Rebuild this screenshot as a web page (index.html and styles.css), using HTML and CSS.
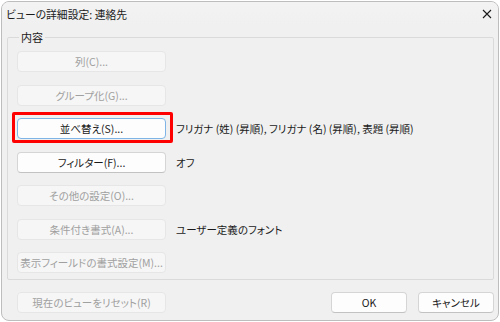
FILE: index.html
```html
<!DOCTYPE html>
<html lang="ja">
<head>
    <meta charset="UTF-8">
    <title>ビューの詳細設定: 連絡先</title>
    <link rel="stylesheet" href="styles.css">
</head>
<body>
    <div class="window">
        <div class="titlebar">
            <span class="title">ビューの詳細設定: 連絡先</span>
            <svg class="close" width="10" height="10" viewBox="0 0 10 10">
                <path d="M1 1 L9 9 M9 1 L1 9" stroke="#1a1a1a" stroke-width="1.1" fill="none"/>
            </svg>
        </div>

        <fieldset class="group">
            <legend>内容</legend>
            <div class="row">
                <button class="btn" disabled>列(C)...</button>
            </div>
            <div class="row">
                <button class="btn" disabled>グループ化(G)...</button>
            </div>
            <div class="row">
                <button class="btn focus">並べ替え(S)...<span class="mark"></span></button>
                <span class="info">フリガナ (姓) (昇順), フリガナ (名) (昇順), 表題 (昇順)</span>
            </div>
            <div class="row">
                <button class="btn">フィルター(F)...</button>
                <span class="info">オフ</span>
            </div>
            <div class="row">
                <button class="btn" disabled>その他の設定(O)...</button>
            </div>
            <div class="row">
                <button class="btn" disabled>条件付き書式(A)...</button>
                <span class="info">ユーザー定義のフォント</span>
            </div>
            <div class="row">
                <button class="btn" disabled>表示フィールドの書式設定(M)...</button>
            </div>
        </fieldset>

        <div class="footer">
            <button class="btn" disabled>現在のビューをリセット(R)</button>
            <div class="actions">
                <button class="btn small">OK</button>
                <button class="btn small">キャンセル</button>
            </div>
        </div>
    </div>
</body>
</html>
```

FILE: styles.css
```css
* {
    margin: 0;
    padding: 0;
    box-sizing: border-box;
}

body {
    background: #ffffff;
    font-family: "Noto Sans CJK JP", "Noto Sans", sans-serif;
    font-size: 10.5px;
    font-feature-settings: "palt";
    color: #1a1a1a;
}

.window {
    width: 498px;
    height: 320px;
    margin: 1px 0 0 1px;
    border: 1px solid #bdbdbd;
    border-radius: 8px;
    background: #f0f0f0;
    display: flex;
    flex-direction: column;
    overflow: hidden;
}

.titlebar {
    height: 23px;
    padding: 0 6px 0 4px;
    display: flex;
    align-items: center;
    justify-content: space-between;
    background: linear-gradient(#f3f3f3, #f0f0f0);
}

.title {
    font-size: 10.8px;
}

.group {
    margin: 5px 4px 0 5px;
    border: 1px solid #dadada;
    border-radius: 2px;
    padding: 7px 9px 6px 9px;
    display: flex;
    flex-direction: column;
    gap: 12.5px;
}

.group legend {
    margin-left: 2px;
    padding: 0 2px;
    line-height: 14px;
    font-size: 11px;
}

.row {
    display: flex;
    align-items: center;
    gap: 10px;
}

.btn {
    position: relative;
    width: 149px;
    height: 21px;
    padding: 0;
    font: inherit;
    font-feature-settings: "palt";
    white-space: nowrap;
    color: #1a1a1a;
    background: #fdfdfd;
    border: 1px solid #d5d5d5;
    border-bottom-color: #c2c2c2;
    border-radius: 4px;
    flex-shrink: 0;
}

.btn:disabled {
    color: #a0a0a0;
    background: #f6f6f6;
    border-color: #e6e6e6;
}

.btn.focus {
    border-color: #7eb4e6;
}

.mark {
    position: absolute;
    top: -7px;
    left: -6px;
    right: -8px;
    bottom: -5px;
    border: 3px solid #ff0000;
    border-radius: 2px;
}

.info {
    white-space: nowrap;
}

.footer {
    display: flex;
    align-items: center;
    padding: 12px 4px 0 15px;
}

.actions {
    margin-left: auto;
    display: flex;
    gap: 11px;
}

.btn.small {
    width: 76px;
}
```
